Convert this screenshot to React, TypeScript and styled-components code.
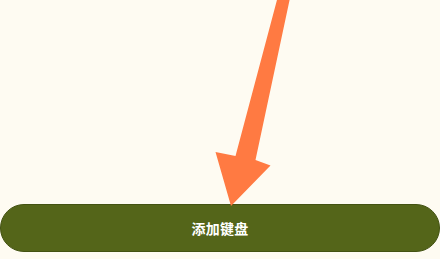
import React from "react";
import styled, { createGlobalStyle } from "styled-components";

const GlobalStyle = createGlobalStyle`
  html, body {
    margin: 0;
    padding: 0;
    background: #fefbf2;
  }
  body {
    font-family: "Noto Sans CJK SC", "Noto Sans", sans-serif;
  }
`;

const Page = styled.div`
  position: relative;
  width: 440px;
  height: 259px;
  overflow: hidden;
  background: #fefbf2;
  display: flex;
  flex-direction: column;
  justify-content: flex-end;
  padding-bottom: 7px;
  box-sizing: border-box;
`;

const AddButton = styled.button`
  width: 440px;
  height: 48px;
  border-radius: 24px;
  border: 1px solid #435212;
  background: #546519;
  color: #ffffff;
  font-family: "Noto Sans CJK SC", "Noto Sans", sans-serif;
  font-size: 14px;
  font-weight: 700;
  letter-spacing: 0.3px;
  display: flex;
  align-items: center;
  justify-content: center;
  padding: 0;
  margin: 0;
  box-sizing: border-box;
  cursor: pointer;
`;

const ArrowLayer = styled.svg`
  position: absolute;
  left: 0;
  top: 0;
  width: 440px;
  height: 259px;
  pointer-events: none;
`;

export default function App() {
  return (
    <>
      <GlobalStyle />
      <Page>
        <AddButton>添加键盘</AddButton>
        <ArrowLayer viewBox="0 0 440 259">
          <polygon
            points="277.5,-2 290,-2 255.5,160 270.5,165.5 231,206 215.5,152 235.5,156"
            fill="#ff7a42"
          />
        </ArrowLayer>
      </Page>
    </>
  );
}
